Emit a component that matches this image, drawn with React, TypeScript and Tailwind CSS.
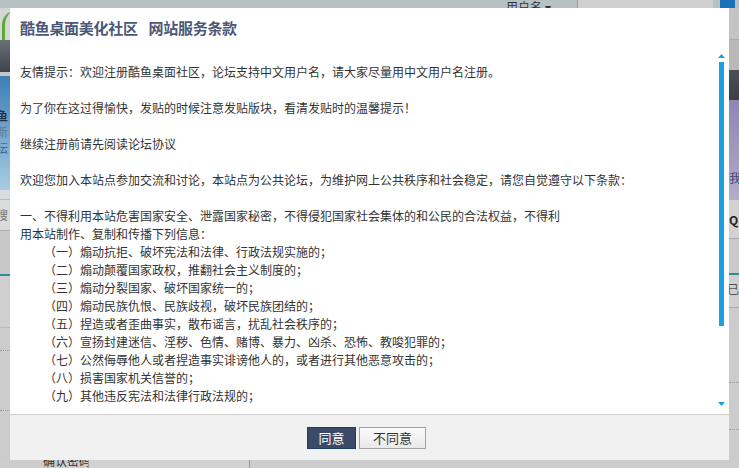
const items = [
  '（一）煽动抗拒、破坏宪法和法律、行政法规实施的；',
  '（二）煽动颠覆国家政权，推翻社会主义制度的；',
  '（三）煽动分裂国家、破坏国家统一的；',
  '（四）煽动民族仇恨、民族歧视，破坏民族团结的；',
  '（五）捏造或者歪曲事实，散布谣言，扰乱社会秩序的；',
  '（六）宣扬封建迷信、淫秽、色情、赌博、暴力、凶杀、恐怖、教唆犯罪的；',
  '（七）公然侮辱他人或者捏造事实诽谤他人的，或者进行其他恶意攻击的；',
  '（八）损害国家机关信誉的；',
  '（九）其他违反宪法和法律行政法规的；',
  '（十）进行商业广告行为的。',
];

function LeftStrip() {
  return (
    <div className="w-[10px] flex flex-col overflow-hidden text-[12px] leading-[16px] text-[#2a4a70]">
      <div className="h-[32px] bg-[#d3d7d7] relative overflow-hidden">
        <div className="absolute left-[2px] top-[2px] w-[30px] h-[50px] rounded-full border-l-[3px] border-[#5ca832]" />
      </div>
      <div className="h-[32px] bg-gradient-to-b from-[#6a7078] to-[#3e444b]" />
      <div className="h-[4px] bg-[#c6c6c6]" />
      <div className="h-[114px] bg-gradient-to-b from-[#3a7fb6] to-[#a9cbe2] pt-[32px] whitespace-nowrap">
        <div className="-ml-[4px] font-bold text-[#1e3550]">鱼</div>
        <div className="-ml-[4px] text-[#5a7a9a]">新</div>
        <div className="-ml-[4px] text-[#3a6a9a]">坛</div>
      </div>
      <div className="h-[10px] bg-[#d9dbdc] border-b border-[#bbbbbb]" />
      <div className="h-[30px] bg-[#d9dbdc] -ml-[4px] pt-[7px] text-[#777] whitespace-nowrap">搜</div>
      <div className="h-[46px] bg-[#c8c8c8] border-t border-[#aaaaaa] border-b-[2px] border-b-[#2a8c9c]" />
      <div className="h-[52px] bg-[#cfcfcf] border-b border-[#b8b8b8]" />
      <div className="flex-1 bg-[#cccccc] pt-[22px]">
        <div className="border-t border-dotted border-[#999]" />
        <div className="mt-[59px] border-t border-dotted border-[#999]" />
      </div>
    </div>
  );
}

function RightStrip() {
  return (
    <div className="w-[10px] flex flex-col overflow-hidden text-[12px] leading-[16px] text-[#2a4a70]">
      <div className="h-[32px] bg-[#c4c4c4] border-b border-[#aaaaaa]" />
      <div className="h-[30px] bg-[#b9b9b9]" />
      <div className="h-[30px] bg-gradient-to-b from-[#4a5058] to-[#3a4046]" />
      <div className="h-[100px] bg-gradient-to-b from-[#8f86b4] to-[#b4acc9] pt-[70px] whitespace-nowrap">
        <div className="text-[#3a4a80]">我</div>
      </div>
      <div className="h-[38px] bg-[#d2d2d2] pt-[12px] whitespace-nowrap text-[#222] font-bold">Q</div>
      <div className="h-[37px] bg-[#cacaca] border-t border-[#aaaaaa] border-b-[2px] border-b-[#2a8c9c]" />
      <div className="h-[33px] bg-[#d0d0d0] border-b border-[#aaaaaa] -ml-[2px] pt-[6px] whitespace-nowrap text-[#555]">已有</div>
      <div className="flex-1 bg-[#cccccc] pt-[74px]">
        <div className="border-t border-dotted border-[#999]" />
        <div className="mt-[46px] border-t border-dotted border-[#999]" />
      </div>
    </div>
  );
}

export default function App() {
  return (
    <div
      className="relative w-[739px] h-[468px] overflow-hidden bg-[#cccccc] flex flex-col"
      style={{ fontFamily: '"Noto Sans CJK SC", "Noto Sans", sans-serif' }}
    >
      {/* page behind the dialog */}
      <div className="h-[8px] bg-[#b7c0c3] flex items-end text-[12px] text-[#333] overflow-hidden">
        <div className="w-[506px]" />
        <div className="w-[71px] leading-[14px] -mb-[6px] whitespace-nowrap">用户名 ▾</div>
        <div className="w-[136px] h-full bg-[#cfcfcf] border-l border-[#999]" />
        <div className="w-[7px]" />
        <div className="w-[15px] h-full bg-[#1a72b6]" />
      </div>
      <div className="flex-1 flex">
        <LeftStrip />
        <div className="flex-1" />
        <RightStrip />
      </div>
      <div className="h-[8px] bg-[#cdcdcd] flex text-[12px] text-[#333] overflow-hidden">
        <div className="w-[43px]" />
        <div className="w-[45px] leading-[14px] -mt-[6px] whitespace-nowrap">确认密码:</div>
        <div className="w-[162px] border-l border-r border-[#999] bg-[#d2d2d2]" />
      </div>

      {/* dialog */}
      <div className="absolute left-[10px] top-[8px] w-[719px] h-[452px] bg-white flex flex-col">
        <div className="h-[40px] px-[10px] flex items-center">
          <h1 className="text-[15px] font-bold text-[#4c5877] tracking-[-0.3px]">
            酷鱼桌面美化社区<span className="ml-[11px]">网站服务条款</span>
          </h1>
        </div>
        <div className="flex-1 flex pt-[15px] pb-[9px] min-h-0">
          <div className="flex-1 overflow-hidden pl-[10px] text-[12px] leading-[18px] text-[#333]">
            <p className="mb-[18px]">友情提示：欢迎注册酷鱼桌面社区，论坛支持中文用户名，请大家尽量用中文用户名注册。</p>
            <p className="mb-[18px]">为了你在这过得愉快，发贴的时候注意发贴版块，看清发贴时的温馨提示！</p>
            <p className="mb-[18px]">继续注册前请先阅读论坛协议</p>
            <p className="mb-[18px]">欢迎您加入本站点参加交流和讨论，本站点为公共论坛，为维护网上公共秩序和社会稳定，请您自觉遵守以下条款：</p>
            <p>
              一、不得利用本站危害国家安全、泄露国家秘密，不得侵犯国家社会集体的和公民的合法权益，不得利
              <br />
              用本站制作、复制和传播下列信息：
            </p>
            {items.map((t) => (
              <p key={t} className="pl-[24px]">{t}</p>
            ))}
          </div>
          <div className="w-[16px] flex flex-col items-center">
            <svg width="7" height="4" viewBox="0 0 7 4" className="mt-[-9px]">
              <polygon points="3.5,0 7,4 0,4" fill="#1e9fe0" />
            </svg>
            <div className="w-[5px] h-[264px] bg-[#1e9fe0] mt-[4px]" />
            <div className="flex-1" />
            <svg width="7" height="4" viewBox="0 0 7 4" className="mb-[-1px]">
              <polygon points="0,0 7,0 3.5,4" fill="#1e9fe0" />
            </svg>
          </div>
        </div>
        <div className="h-[46px] border-t border-[#cfcfcf] bg-[#f1f1f1] flex items-center justify-center gap-[3px] pr-[6px]">
          <button className="w-[49px] h-[22px] bg-[#3b4a69] border border-[#1d3a6c] text-white text-[13px] leading-none">
            同意
          </button>
          <button className="w-[67px] h-[22px] bg-gradient-to-b from-[#fbfbfb] to-[#e9e9e9] border border-[#a3a3a3] text-[#333] text-[13px] leading-none">
            不同意
          </button>
        </div>
      </div>
    </div>
  );
}
